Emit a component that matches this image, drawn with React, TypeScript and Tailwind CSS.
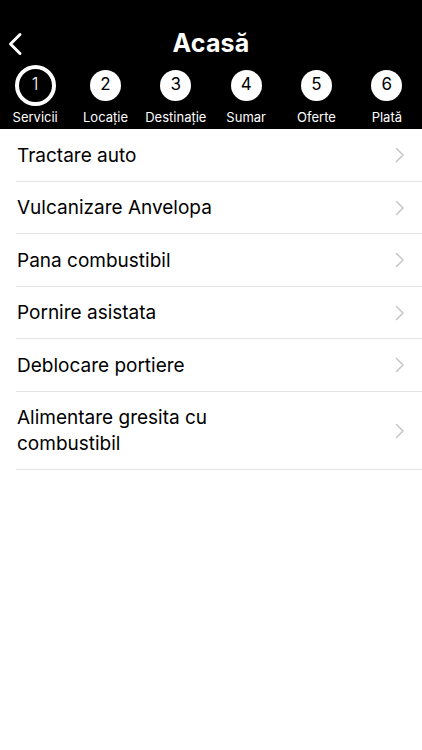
import React from 'react';

const steps = ['Servicii', 'Locație', 'Destinație', 'Sumar', 'Oferte', 'Plată'];

const services = [
  'Tractare auto',
  'Vulcanizare Anvelopa',
  'Pana combustibil',
  'Pornire asistata',
  'Deblocare portiere',
  'Alimentare gresita cu combustibil',
];

const Chevron: React.FC = () => (
  <svg width="10" height="16" viewBox="0 0 10 16" fill="none" className="shrink-0">
    <path d="M1.5 1.5 L8 8 L1.5 14.5" stroke="#c7c7cc" strokeWidth="1.6" strokeLinecap="round" strokeLinejoin="round" />
  </svg>
);

export default function App() {
  return (
    <div className="w-[422px] h-[750px] bg-white font-['Inter','Noto_Sans',sans-serif]">
      <div className="bg-black text-white pt-[28px] pb-[5px]">
        <div className="relative h-[30px] flex items-center justify-center">
          <svg width="16" height="24" viewBox="0 0 16 24" fill="none" className="absolute left-[7px] top-[4px]">
            <path d="M13 2.5 L3.5 12 L13 21.5" stroke="white" strokeWidth="3" strokeLinecap="round" strokeLinejoin="round" />
          </svg>
          <h1 className="text-[25px] font-bold leading-[30px] tracking-[0.2px]">Acasă</h1>
        </div>
        <div className="grid grid-cols-6 mt-[6px]">
          {steps.map((label, i) => (
            <div key={label} className="flex flex-col items-center">
              <div className="h-[42px] flex items-center justify-center">
                {i === 0 ? (
                  <div className="w-[41px] h-[41px] rounded-full border-[4px] border-white bg-black flex items-center justify-center text-[17px] font-light">
                    {i + 1}
                  </div>
                ) : (
                  <div className="w-[31px] h-[31px] rounded-full bg-white text-black flex items-center justify-center text-[17px]">
                    {i + 1}
                  </div>
                )}
              </div>
              <span className="mt-[4px] text-[13px] leading-[14px]">{label}</span>
            </div>
          ))}
        </div>
      </div>

      <ul className="pl-[16px]">
        {services.map((s) => (
          <li key={s} className="flex items-center justify-between pr-[17px] pt-[13.5px] pb-[12.5px] border-b border-[#e3e3e6]">
            <span className="pl-[1px] max-w-[230px] text-[19px] leading-[25.5px] text-black">{s}</span>
            <Chevron />
          </li>
        ))}
      </ul>
    </div>
  );
}
